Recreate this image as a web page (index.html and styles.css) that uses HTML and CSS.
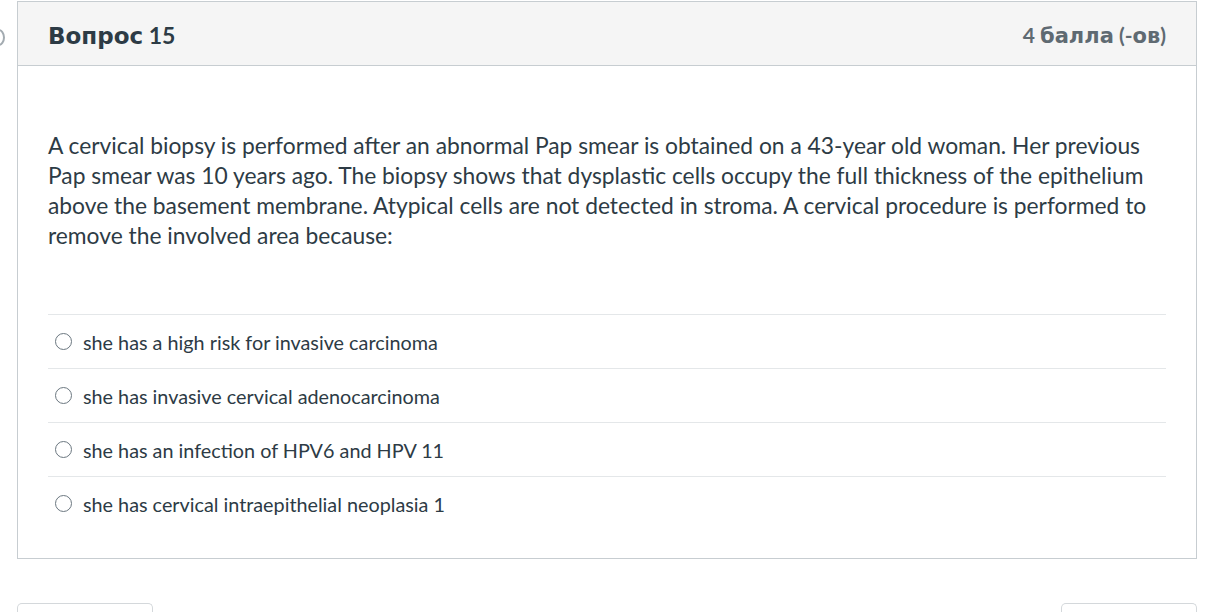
FILE: index.html
```html
<!DOCTYPE html>
<html lang="ru">
<head>
<meta charset="utf-8">
<link rel="stylesheet" href="styles.css">
</head>
<body>
<div class="page">
  <span class="edge-icon"></span>
  <div class="question">
    <div class="q-header">
      <h2 class="q-title"><span class="cyr">Вопрос</span> 15</h2>
      <span class="q-points">4 <span class="cyr">балла</span> (-<span class="cyr">ов</span>)</span>
    </div>
    <div class="q-body">
      <p class="q-text">A cervical biopsy is performed after an abnormal Pap smear is obtained on a 43-year old woman. Her previous Pap smear was 10 years ago. The biopsy shows that dysplastic cells occupy the full thickness of the epithelium above the basement membrane. Atypical cells are not detected in stroma. A cervical procedure is performed to remove the involved area because:</p>
      <div class="answers">
        <label class="answer"><span class="radio"></span><span class="a-text">she has a high risk for invasive carcinoma</span></label>
        <label class="answer"><span class="radio"></span><span class="a-text">she has invasive cervical adenocarcinoma</span></label>
        <label class="answer"><span class="radio"></span><span class="a-text">she has an infection of HPV6 and HPV 11</span></label>
        <label class="answer"><span class="radio"></span><span class="a-text">she has cervical intraepithelial neoplasia 1</span></label>
      </div>
    </div>
  </div>
  <div class="nav">
    <button class="btn" type="button"></button>
    <button class="btn" type="button"></button>
  </div>
</div>
</body>
</html>
```
FILE: styles.css
```css
html, body {
  margin: 0;
  padding: 0;
  background: #ffffff;
}
body {
  font-family: Lato, "Open Sans", "Liberation Sans", sans-serif;
  color: #2d3b45;
  overflow: hidden;
  height: 612px;
}
.page {
  position: relative;
  padding: 1px 21px 0 17px;
}
.edge-icon {
  position: absolute;
  left: -8px;
  top: 29px;
  width: 9px;
  height: 13px;
  border: 2px solid #a3abb1;
  border-radius: 50%;
}
.question {
  border: 1px solid #c7cdd1;
}
.q-header {
  box-sizing: border-box;
  display: flex;
  align-items: center;
  justify-content: space-between;
  height: 64px;
  padding: 3px 30px 0;
  background: #f5f5f5;
  border-bottom: 1px solid #c7cdd1;
}
.q-title {
  margin: 0;
  font-size: 23px;
  font-weight: 700;
  color: #2d3b45;
}
.q-points {
  font-size: 21px;
  font-weight: 700;
  color: #5f6a72;
}
.cyr {
  font-family: "DejaVu Sans", Lato, sans-serif;
}
.q-body {
  padding: 64px 30px 28px;
}
.q-text {
  margin: 0 0 64px;
  font-size: 22.8px;
  line-height: 30px;
}
.answer {
  display: flex;
  align-items: center;
  height: 53px;
  border-top: 1px solid #e4e7e9;
  font-size: 19.8px;
}
.radio {
  box-sizing: border-box;
  width: 17px;
  height: 17px;
  margin: 0 11px 0 7px;
  border: 1px solid #6b7780;
  border-radius: 50%;
  flex: none;
}
.nav {
  display: flex;
  justify-content: space-between;
  margin-top: 44px;
}
.btn {
  width: 136px;
  height: 9px;
  background: #ffffff;
  border: 1px solid #d4d8db;
  border-bottom: none;
  border-radius: 5px 5px 0 0;
}
```
